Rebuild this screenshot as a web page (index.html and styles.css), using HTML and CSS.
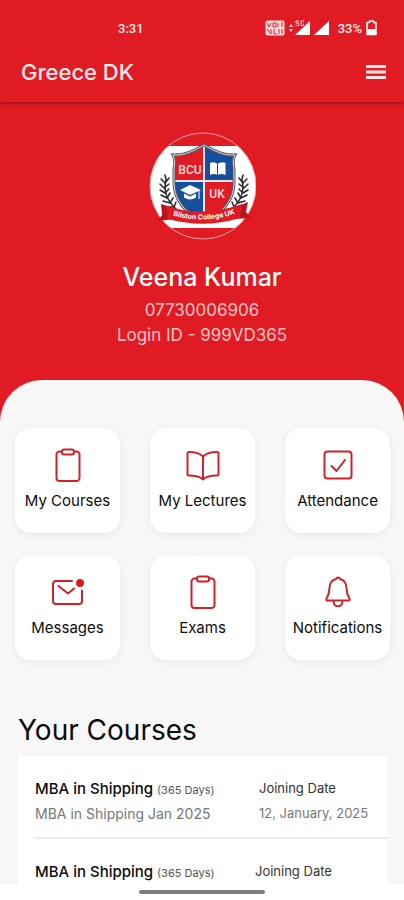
FILE: index.html
```html
<!DOCTYPE html>
<html lang="en">
<head>
  <meta charset="UTF-8">
  <meta name="viewport" content="width=device-width, initial-scale=1.0">
  <title>Greece DK</title>
  <link rel="stylesheet" href="styles.css">
</head>
<body>
  <header class="top">
    <div class="status-bar">
      <span class="status-time">3:31</span>
      <div class="status-icons">
        <svg width="20" height="16" viewBox="0 0 20 16" aria-hidden="true">
          <rect x="0.5" y="0.5" width="19" height="15" rx="2" fill="#fbdcdd"/>
          <path d="M2 3l2 4 2-4M8 3v4h3V3zM13 3v4M17 2v5M2 9l4 5M6 9v5M9 9v5h3M14 9v5M17 9v5" fill="none" stroke="#e11b24" stroke-width="1"/>
        </svg>
        <svg class="signal-5g" width="21" height="16" viewBox="0 0 21 16" aria-hidden="true">
          <path d="M0 7l2-3 2 3zM0 9l2 3 2-3z" fill="#fbdcdd"/>
          <path d="M21 1v14H6z" fill="#fff"/>
          <path d="M10 1H7v2h2.500v2.500H6.500M15 1h-3v4.500h2.500V3.500" fill="none" stroke="#fbdcdd" stroke-width="1"/>
        </svg>
        <svg width="15" height="16" viewBox="0 0 15 16" aria-hidden="true">
          <path d="M15 1v14H0z" fill="#fff"/>
        </svg>
        <span class="battery-level">33%</span>
        <svg width="11" height="16" viewBox="0 0 11 16" aria-hidden="true">
          <path d="M3.500 2.500V1h4v1.500H10V14.500H1V2.500z" fill="none" stroke="#fff" stroke-width="1.500" stroke-linejoin="round"/>
          <path d="M1.500 9h8v5h-8z" fill="#fff"/>
        </svg>
      </div>
    </div>
    <div class="app-bar">
      <h1 class="app-title">Greece DK</h1>
      <button class="menu-button" type="button" aria-label="Menu">
        <svg width="20" height="16" viewBox="0 0 20 16" aria-hidden="true">
          <path d="M0 2.500h20M0 8h20M0 13.500h20" stroke="#fde4e5" stroke-width="3"/>
        </svg>
      </button>
    </div>
  </header>

  <main class="content">
    <section class="profile">
      <svg class="college-logo" width="108" height="108" viewBox="0 0 108 108" role="img" aria-label="Bilston College UK">
        <defs>
          <clipPath id="logoCircle"><circle cx="55" cy="54" r="53"/></clipPath>
          <clipPath id="shield"><path d="M56 13C48 18 36 24 25 23q3 6 1 13v14c0 20 13 32 30 40 17-8 30-20 30-40V36q-2-7 1-13C76 24 64 18 56 13z"/></clipPath>
          <path id="ribbonLine" d="M20 82Q56 94 92 80"/>
        </defs>
        <g clip-path="url(#logoCircle)">
          <path d="M0 14h108v82H0z" fill="#fff"/>
        </g>
        <circle cx="55" cy="54" r="53" fill="none" stroke="#f3a5a8" stroke-width="1"/>
        <g clip-path="url(#shield)">
          <path d="M20 10h36v39H20zM56 49h36v45H56z" fill="#e11b24"/>
          <path d="M56 10h36v39H56zM20 49h36v45H20z" fill="#174f9f"/>
          <path d="M56 10v80M20 49h72" stroke="#e6e6ea" stroke-width="2"/>
        </g>
        <path d="M56 13C48 18 36 24 25 23q3 6 1 13v14c0 20 13 32 30 40 17-8 30-20 30-40V36q-2-7 1-13C76 24 64 18 56 13z" fill="none" stroke="#55585f" stroke-width="3"/>
        <path d="M56 13C48 18 36 24 25 23q3 6 1 13v14c0 20 13 32 30 40 17-8 30-20 30-40V36q-2-7 1-13C76 24 64 18 56 13z" fill="none" stroke="#d9d9dd" stroke-width="1"/>
        <text class="logo-initials" x="42" y="42">BCU</text>
        <text class="logo-initials" x="69" y="66">UK</text>
        <path d="M62 31q4-2 7.500 1 4-3 8-1v12q-4-2-8 0-3.500-2-7.500 0z" fill="#fff"/>
        <path d="M69.500 32v11" stroke="#174f9f" stroke-width="1"/>
        <path d="M45 53l11 5-11 5-10-5z" transform="translate(-3 0)" fill="#fff"/>
        <path d="M36 61.500v4q6 4 12 0v-4l-6 3z" fill="#fff"/>
        <path d="M51 59v8" stroke="#fff" stroke-width="1"/>
        <!-- laurel branches -->
        <g stroke="#26262b" stroke-width="1.500" fill="none" stroke-linecap="round">
          <path d="M18 48Q14 64 28 77M94 48Q98 64 84 77"/>
          <path d="M18 47l-1-4M17 51l-4-4M17 51l4-5M16 56l-4-4M16 56l5-4M17 61l-5-3M17 61l4-4M19 66l-6-3M19 66l3-5M22 71l-7-2M22 71l3-5M26 75l-7 0M26 75l2-5"/>
          <path d="M94 47l1-4M95 51l4-4M95 51l-4-5M96 56l4-4M96 56l-5-4M95 61l5-3M95 61l-4-4M93 66l6-3M93 66l-3-5M90 71l7-2M90 71l-3-5M86 75l7 0M86 75l-2-5"/>
        </g>
        <path d="M13 72l13 4v11l-16 2 4-6zM100 70l-14 6v11l17-1-5-6z" fill="#b9151d"/>
        <path d="M18 74Q56 86 94 72l-2 14q-36 11-72 1z" fill="#e11b24"/>
        <text class="logo-ribbon"><textPath href="#ribbonLine" startOffset="50%">Bilston College UK</textPath></text>
      </svg>
      <h2 class="profile-name">Veena Kumar</h2>
      <p class="profile-line">07730006906</p>
      <p class="profile-line">Login ID - 999VD365</p>
    </section>

    <div class="sheet">
      <nav class="tiles">
        <a class="tile" href="#courses">
          <svg class="tile-icon" viewBox="0 0 36 36" aria-hidden="true">
            <path d="M12 4.500H9.500a3 3 0 0 0-3 3V31a3 3 0 0 0 3 3h17a3 3 0 0 0 3-3V7.500a3 3 0 0 0-3-3H24"/>
            <rect x="12" y="2.500" width="12" height="5" rx="2"/>
          </svg>
          <span>My Courses</span>
        </a>
        <a class="tile" href="#lectures">
          <svg class="tile-icon" viewBox="0 0 36 36" aria-hidden="true">
            <path d="M18 9.500C14 5.500 8 5 4 5a1.500 1.500 0 0 0-1.500 1.500V27A1.500 1.500 0 0 0 4 28.500c6 0 11 1 14 4 3-3 8-4 14-4a1.500 1.500 0 0 0 1.500-1.500V6.500A1.500 1.500 0 0 0 32 5c-4 0-10 .5-14 4.500zM18 9.500v23"/>
          </svg>
          <span>My Lectures</span>
        </a>
        <a class="tile" href="#attendance">
          <svg class="tile-icon" viewBox="0 0 36 36" aria-hidden="true">
            <rect x="4.500" y="4.500" width="27" height="27" rx="3"/>
            <path d="M11.500 19l5 5L25 13"/>
          </svg>
          <span>Attendance</span>
        </a>
        <a class="tile" href="#messages">
          <svg class="tile-icon" viewBox="0 0 36 36" aria-hidden="true">
            <path d="M22 7H6a3 3 0 0 0-3 3v17a3 3 0 0 0 3 3h23a3 3 0 0 0 3-3V16.500M8.500 12l9.500 7.500 6-5"/>
            <circle class="unread-dot" cx="30" cy="9" r="4"/>
          </svg>
          <span>Messages</span>
        </a>
        <a class="tile" href="#exams">
          <svg class="tile-icon" viewBox="0 0 36 36" aria-hidden="true">
            <path d="M12 4.500H9.500a3 3 0 0 0-3 3V31a3 3 0 0 0 3 3h17a3 3 0 0 0 3-3V7.500a3 3 0 0 0-3-3H24"/>
            <rect x="12" y="2.500" width="12" height="5" rx="2"/>
          </svg>
          <span>Exams</span>
        </a>
        <a class="tile" href="#notifications">
          <svg class="tile-icon" viewBox="0 0 36 36" aria-hidden="true">
            <path d="M18 3.500q-1.500 0-2 1.500c-4 1-6.500 4-6.500 9 0 5-1.500 8-3 10.500q-.5 2 .5 2h22q1 0 .5-2c-1.500-2.500-3-5.500-3-10.500 0-5-2.500-8-6.500-9q-.5-1.500-2-1.500zM13.500 27c0 7 9 7 9 0"/>
          </svg>
          <span>Notifications</span>
        </a>
      </nav>

      <section class="courses" id="courses">
        <h2 class="courses-title">Your Courses</h2>
        <ul class="course-list">
          <li class="course">
            <div class="course-info">
              <h3 class="course-name">MBA in Shipping <small>(365 Days)</small></h3>
              <p class="course-batch">MBA in Shipping Jan 2025</p>
            </div>
            <div class="course-date">
              <p class="date-label">Joining Date</p>
              <p class="date-value">12, January, 2025</p>
            </div>
          </li>
          <li class="course">
            <div class="course-info">
              <h3 class="course-name">MBA in Shipping <small>(365 Days)</small></h3>
            </div>
            <div class="course-date course-date-wide">
              <p class="date-label">Joining Date</p>
            </div>
          </li>
        </ul>
      </section>
    </div>
  </main>

  <div class="gesture-bar"><span class="gesture-handle"></span></div>
</body>
</html>
```

FILE: styles.css
```css
/* Base styles */
* {
  box-sizing: border-box;
}

body {
  display: flex;
  flex-direction: column;
  height: 100vh;
  margin: 0;
  background-color: #fff;
  color: #0c0c0c;
  font-family: Inter, "Open Sans", sans-serif;
}

h1, h2, h3, p, ul {
  margin: 0;
  padding: 0;
  font-weight: 400;
}

/* Header */
.top {
  position: relative;
  flex: none;
  background-color: #e11b24;
  color: #fde9ea;
  box-shadow: 0 1px 4px rgba(80, 0, 0, 0.6);
}

.status-bar {
  display: flex;
  align-items: center;
  justify-content: space-between;
  height: 42px;
  padding: 14px 27px 0 118px;
  font-family: Roboto, sans-serif;
  font-size: 13px;
  font-weight: 500;
}

.status-icons {
  display: flex;
  align-items: center;
  gap: 4px;
}

.battery-level {
  margin-left: 5px;
}

.app-bar {
  display: flex;
  align-items: center;
  justify-content: space-between;
  height: 60px;
  padding: 0 18px 0 21px;
}

.app-title {
  font-size: 22px;
  font-weight: 500;
}

.menu-button {
  display: flex;
  padding: 0;
  border: none;
  background: none;
  cursor: pointer;
}

/* Profile */
.content {
  flex: 1;
  min-height: 0;
  overflow: hidden;
  background-color: #e11b24;
}

.profile {
  display: flex;
  flex-direction: column;
  align-items: center;
  padding: 30px 16px 32px;
  color: #f9c3c6;
}

.logo-initials {
  fill: #fbdfe0;
  font-size: 12px;
  font-family: Roboto, sans-serif;
  font-weight: 500;
  text-anchor: middle;
}

.logo-ribbon {
  fill: #fff;
  font-size: 7px;
  font-weight: 700;
  text-anchor: middle;
}

.profile-name {
  margin: 20px 0 4px;
  color: #fff;
  font-size: 25px;
  font-weight: 500;
  line-height: 34px;
}

.profile-line {
  font-size: 17px;
  line-height: 25px;
}

/* Sheet */
.sheet {
  min-height: 100%;
  padding: 48px 14px 0 15px;
  border-radius: 42px 42px 0 0;
  background-color: #f7f7f7;
}

.tiles {
  display: grid;
  grid-template-columns: repeat(3, 1fr);
  gap: 22px 30px;
}

.tile {
  display: flex;
  flex-direction: column;
  align-items: center;
  aspect-ratio: 1;
  padding-top: 19px;
  border-radius: 16px;
  background-color: #fff;
  box-shadow: 0 2px 8px rgba(0, 0, 0, 0.06);
  color: #0c0c0c;
  font-size: 15px;
  line-height: 20px;
  text-decoration: none;
  white-space: nowrap;
}

.tile-icon {
  width: 36px;
  height: 36px;
  margin-bottom: 8px;
  fill: none;
  stroke: #cf2229;
  stroke-width: 2;
  stroke-linecap: round;
  stroke-linejoin: round;
}

.unread-dot {
  fill: #e11b24;
  stroke: none;
}

/* Courses */
.courses {
  margin-top: 50px;
  padding: 0 3px;
}

.courses-title {
  font-size: 28px;
  line-height: 40px;
}

.course-list {
  margin-top: 6px;
  padding-left: 17px;
  background-color: #fff;
  list-style: none;
}

.course {
  display: flex;
  justify-content: space-between;
  padding: 20px 16px 11px 0;
  border-bottom: 2px solid #ececec;
  white-space: nowrap;
}

.course-name {
  font-size: 15px;
  font-weight: 500;
  line-height: 25px;
}

.course-name small {
  color: #555;
  font-size: 11px;
  font-weight: 400;
  line-height: 1;
}

.course-date {
  width: 112px;
}

.course-date-wide {
  width: 116px;
}

.date-label {
  color: #333;
  font-size: 13px;
  line-height: 25px;
}

.course-batch,
.date-value {
  color: #777;
  font-size: 13px;
  line-height: 25px;
}

.course-batch {
  font-size: 14px;
}

/* Gesture bar */
.gesture-bar {
  display: flex;
  flex: none;
  align-items: center;
  justify-content: center;
  height: 16px;
}

.gesture-handle {
  width: 126px;
  height: 4px;
  border-radius: 2px;
  background-color: #7c7c7c;
}
```
